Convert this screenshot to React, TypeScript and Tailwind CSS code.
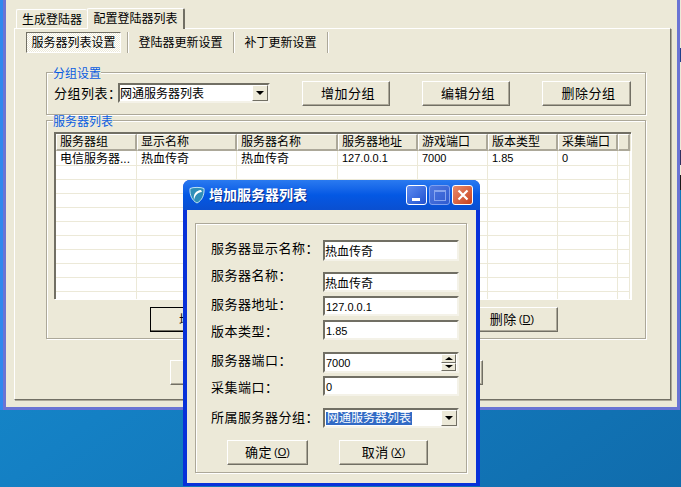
import type { ReactNode } from "react";

const columns = ["服务器组", "显示名称", "服务器名称", "服务器地址", "游戏端口", "版本类型", "采集端口", ""];
const firstRow = ["电信服务器...", "热血传奇", "热血传奇", "127.0.0.1", "7000", "1.85", "0", ""];
const colGrid = "grid grid-cols-[81px_100px_101px_80px_70px_70px_60px_12px]";

function RaisedButton({ children, className }: { children?: ReactNode; className: string }) {
  return (
    <button className={`flex items-center justify-center bg-[#ece9d8] border border-t-white border-l-white border-r-[#716f64] border-b-[#716f64] shadow-[inset_-1px_-1px_0_#aca899] text-[13px] tracking-[0.5px] leading-none ${className}`}>
      {children}
    </button>
  );
}

function DefaultButton({ children, className }: { children?: ReactNode; className: string }) {
  return (
    <button className={`flex items-center justify-center bg-[#ece9d8] border border-black shadow-[inset_-1px_-1px_0_#716f64] text-[13px] leading-none ${className}`}>
      {children}
    </button>
  );
}

function Hotkey({ letter }: { letter: string }) {
  return (
    <span className="ml-[2px] text-[11px] tracking-normal">
      (<span className="underline">{letter}</span>)
    </span>
  );
}

function Group({ title, className, children }: { title?: string; className: string; children: ReactNode }) {
  return (
    <div className={`relative border border-[#aca899] shadow-[inset_1px_1px_0_#fff,1px_1px_0_#fff] ${className}`}>
      {title && (
        <span className="absolute left-[6px] top-[-5px] bg-[#ece9d8] text-[12px] leading-[12px] text-[#0a5ce0]">
          {title}
        </span>
      )}
      {children}
    </div>
  );
}

function DropButton() {
  return (
    <span className="flex items-center justify-center w-[16px] h-[16px] bg-[#ece9d8] border border-t-white border-l-white border-r-[#716f64] border-b-[#716f64]">
      <span className="w-0 h-0 border-x-[4px] border-x-transparent border-t-[4px] border-t-black" />
    </span>
  );
}

function SpinButton({ up }: { up?: boolean }) {
  return (
    <div className="flex-1 flex items-center justify-center bg-[#ece9d8] border border-t-white border-l-white border-r-[#716f64] border-b-[#716f64]">
      {up ? (
        <span className="w-0 h-0 border-x-[4px] border-x-transparent border-b-[3px] border-b-black" />
      ) : (
        <span className="w-0 h-0 border-x-[4px] border-x-transparent border-t-[3px] border-t-black" />
      )}
    </div>
  );
}

function Field({ children, className = "h-[20px]" }: { children: ReactNode; className?: string }) {
  return (
    <div className={`flex items-center justify-between w-[136px] bg-white border-2 border-t-[#716f64] border-l-[#716f64] border-r-[#f4f2e8] border-b-[#f4f2e8] leading-none ${className}`}>
      {children}
    </div>
  );
}

function CjkValue({ children }: { children: string }) {
  return <span className="text-[12px] pt-[3px]">{children}</span>;
}

function NumValue({ children }: { children: string }) {
  return <span className="text-[11px] pl-[1px] pt-[2px]">{children}</span>;
}

function InnerTab({ label, width }: { label: string; width: string }) {
  return (
    <div className={`flex items-center justify-center h-[21px] border-r border-r-[#aca899] shadow-[1px_0_0_#fff] text-[12px] ${width}`}>
      {label}
    </div>
  );
}

function ShieldLogo() {
  return (
    <svg width="16" height="18" viewBox="0 0 16 18" className="shrink-0">
      <path d="M1 2.5C4 1 12 1 15 2.5C15.5 9 13 14.5 8 17C3 14.5.5 9 1 2.5Z" fill="#2f8fb8" stroke="#bfe3f2" strokeWidth="1" />
      <path d="M12 4C7 4.500 4 8 5 14C6 9.500 8.500 6.500 13 6Z" fill="#ffffff" />
    </svg>
  );
}

function DialogLabel({ children, className }: { children: string; className: string }) {
  return <div className={`h-[16px] text-[13px] tracking-[0.5px] leading-[16px] whitespace-nowrap ${className}`}>{children}</div>;
}

function Dialog() {
  return (
    <div className="absolute left-[183px] top-[180px] w-[297px] h-[306px] flex flex-col rounded-t-[7px] bg-[#0831d9] px-[4px] pb-[3px] overflow-hidden">
      <div className="-mx-[4px] flex items-center h-[30px] shrink-0 pl-[6px] pr-[7px] bg-gradient-to-b from-[#2a7af0] via-[#0458e4] to-[#0a4fd0]">
        <ShieldLogo />
        <span className="ml-[4px] text-[14px] font-bold text-white leading-none [text-shadow:1px_1px_0_#0a2f90]">增加服务器列表</span>
        <div className="ml-auto flex gap-[2px]">
          <div className="relative w-[21px] h-[20px] rounded-[3px] border border-white bg-gradient-to-br from-[#5f8cf0] to-[#2050d0]">
            <span className="absolute left-[5px] bottom-[3px] w-[8px] h-[3px] bg-white" />
          </div>
          <div className="relative w-[21px] h-[20px] rounded-[3px] border border-[#7fa0ee] bg-gradient-to-br from-[#4f78e0] to-[#2f5ad0] flex items-center justify-center">
            <span className="w-[12px] h-[11px] border border-[#86a4ee] border-t-2" />
          </div>
          <div className="relative w-[21px] h-[20px] rounded-[3px] border border-white bg-gradient-to-br from-[#e88a6a] to-[#c8401a] flex items-center justify-center">
            <svg width="12" height="12" viewBox="0 0 12 12">
              <path d="M1.500 1.500L10.500 10.500M10.500 1.500L1.500 10.500" stroke="#fff" strokeWidth="2.200" />
            </svg>
          </div>
        </div>
      </div>
      <div className="flex-1 bg-[#ece9d8] pt-[13px] pl-[8px]">
        <Group className="w-[272px] h-[250px] flex flex-col">
          <div className="flex pl-[15px] pt-[17px]">
            <div className="flex flex-col w-[112px]">
              <DialogLabel className="">服务器显示名称：</DialogLabel>
              <DialogLabel className="mt-[11px]">服务器名称：</DialogLabel>
              <DialogLabel className="mt-[13px]">服务器地址：</DialogLabel>
              <DialogLabel className="mt-[11px]">版本类型：</DialogLabel>
              <DialogLabel className="mt-[13px]">服务器端口：</DialogLabel>
              <DialogLabel className="mt-[11px]">采集端口：</DialogLabel>
              <DialogLabel className="mt-[14px]">所属服务器分组：</DialogLabel>
            </div>
            <div className="flex flex-col gap-[4px] -mt-[1px]">
              <Field className="h-[21px]">
                <CjkValue>热血传奇</CjkValue>
              </Field>
              <div className="mt-[7px]">
                <Field>
                  <CjkValue>热血传奇</CjkValue>
                </Field>
              </div>
              <Field>
                <NumValue>127.0.0.1</NumValue>
              </Field>
              <Field>
                <NumValue>1.85</NumValue>
              </Field>
              <div className="mt-[8px] -mb-[1px]">
                <Field className="h-[21px]">
                  <NumValue>7000</NumValue>
                  <div className="flex flex-col w-[15px] h-[17px] mr-[1px]">
                    <SpinButton up />
                    <SpinButton />
                  </div>
                </Field>
              </div>
              <Field>
                <NumValue>0</NumValue>
              </Field>
              <div className="mt-[8px]">
                <Field>
                  <span className="ml-[1px] bg-[#316ac5] text-white text-[12px] leading-[13px] px-[1px]">网通服务器列表</span>
                  <DropButton />
                </Field>
              </div>
            </div>
          </div>
          <div className="flex pl-[31px] pt-[12px] gap-[31px]">
            <RaisedButton className="w-[81px] h-[25px]">
              确定
              <Hotkey letter="O" />
            </RaisedButton>
            <RaisedButton className="w-[89px] h-[25px]">
              取消
              <Hotkey letter="X" />
            </RaisedButton>
          </div>
        </Group>
      </div>
    </div>
  );
}

export default function App() {
  return (
    <div className="relative w-[681px] h-[487px] overflow-hidden bg-gradient-to-br from-[#1896d0] via-[#1480c4] to-[#106cac] font-['Liberation_Sans','Noto_Sans_CJK_SC',sans-serif] text-black">
      {/* Main window */}
      <div className="ml-[3px] w-[677px] h-[410px] bg-[#ece9d8] border-x-[3px] border-b-[3px] border-[#6a74d4] shadow-[-3px_0_0_#2f88ee]">
        {/* Outer tabs */}
        <div className="flex items-end h-[28px] pl-[10px]">
          <div className="flex items-center justify-center w-[71px] h-[19px] pt-[1px] border-t border-l border-t-white border-l-white rounded-t-[2px] text-[12px]">
            生成登陆器
          </div>
          <div className="flex items-center justify-center w-[98px] h-[21px] pb-[1px] mb-[-1px] relative bg-[#ece9d8] border-t border-l border-r-2 border-t-white border-l-white border-r-[#716f64] rounded-t-[2px] text-[12px]">
            配置登陆器列表
          </div>
        </div>

        {/* Tab panel */}
        <div className="ml-[8px] w-[657px] h-[372px] border border-t-white border-l-white border-r-[#716f64] border-b-[#716f64] shadow-[1px_1px_0_#aca899] pl-[11px] pt-[3px]">
          <div className="flex h-[21px]">
            <div className="flex items-center justify-center w-[95px] h-[21px] border border-t-[#716f64] border-l-[#716f64] border-r-white border-b-white bg-[repeating-conic-gradient(#ffffff_0_25%,#ece9d8_0_50%)] bg-[length:2px_2px] text-[12px]">
              服务器列表设置
            </div>
            <InnerTab label="" width="w-[7px]" />
            <InnerTab label="登陆器更新设置" width="w-[106px]" />
            <InnerTab label="补丁更新设置" width="w-[94px]" />
          </div>

          {/* 分组设置 */}
          <Group title="分组设置" className="ml-[20px] mt-[19px] w-[600px] h-[43px] flex items-center">
            <span className="ml-[7px] w-[64px] text-[13px] tracking-[0.5px] whitespace-nowrap">分组列表：</span>
            <div className="flex items-center justify-between w-[152px] h-[20px] bg-white border-2 border-t-[#716f64] border-l-[#716f64] border-r-[#f4f2e8] border-b-[#f4f2e8] mt-[-1px]">
              <span className="text-[12px] leading-none pt-[2px]">网通服务器列表</span>
              <DropButton />
            </div>
            <RaisedButton className="ml-[32px] w-[88px] h-[25px] pl-[4px] mt-[-6px] translate-y-[3px]">增加分组</RaisedButton>
            <RaisedButton className="ml-[32px] w-[88px] h-[25px] pl-[4px] mt-[-6px] translate-y-[3px]">编辑分组</RaisedButton>
            <RaisedButton className="ml-[32px] w-[89px] h-[25px] pl-[4px] mt-[-6px] translate-y-[3px]">删除分组</RaisedButton>
          </Group>

          {/* 服务器列表 */}
          <Group title="服务器列表" className="ml-[20px] mt-[5px] w-[600px] h-[219px] pl-[7px] pt-[11px]">
            <div className="w-[577px] h-[167px] bg-white border-t-2 border-l-2 border-t-[#716f64] border-l-[#716f64] shadow-[1px_1px_0_#fff] overflow-hidden">
              <div className={`${colGrid} h-[17px] bg-[#ece9d8]`}>
                {columns.map((c, i) => (
                  <div key={i} className="h-[17px] flex items-center pl-[3px] border-t border-l border-t-white border-l-white border-r-2 border-r-[#aca899] border-b-2 border-b-[#aca899] text-[12px] leading-none">
                    {c}
                  </div>
                ))}
              </div>
              <div className={`${colGrid} h-[15px]`}>
                {firstRow.map((c, i) => (
                  <div key={i} className={`h-[15px] flex items-center pl-[4px] pt-[1px] border-r border-b border-[#ece9d8] leading-none whitespace-nowrap ${i >= 3 ? "text-[11px]" : "text-[12px]"}`}>
                    {c}
                  </div>
                ))}
              </div>
              {Array.from({ length: 10 }).map((_, r) => (
                <div key={r} className={`${colGrid} h-[14px]`}>
                  {columns.map((_, i) => (
                    <div key={i} className="h-[14px] border-r border-b border-[#ece9d8]" />
                  ))}
                </div>
              ))}
            </div>
            <div className="flex gap-[66px] pl-[96px] mt-[8px]">
              <DefaultButton className="w-[92px] h-[25px] pr-[8px]">增加</DefaultButton>
              <RaisedButton className="w-[92px] h-[25px]" />
              <RaisedButton className="w-[92px] h-[25px]">
                删除
                <Hotkey letter="D" />
              </RaisedButton>
            </div>
          </Group>

          <div className="flex gap-[20px] ml-[144px] mt-[21px]">
            <RaisedButton className="w-[150px] h-[25px]" />
            <RaisedButton className="w-[143px] h-[25px]" />
          </div>
        </div>
      </div>

      <Dialog />

      {/* Sliver of the window behind, at the right edge */}
      <div className="absolute right-0 top-0 w-[1px] h-[190px] flex flex-col bg-[#ece9d8]">
        <div className="mt-[48px] h-[14px] bg-[#20408c]" />
        <div className="mt-[88px] h-[15px] bg-[#303060]" />
        <div className="mt-[10px] h-[15px] bg-[#1a1a1a]" />
      </div>
    </div>
  );
}
